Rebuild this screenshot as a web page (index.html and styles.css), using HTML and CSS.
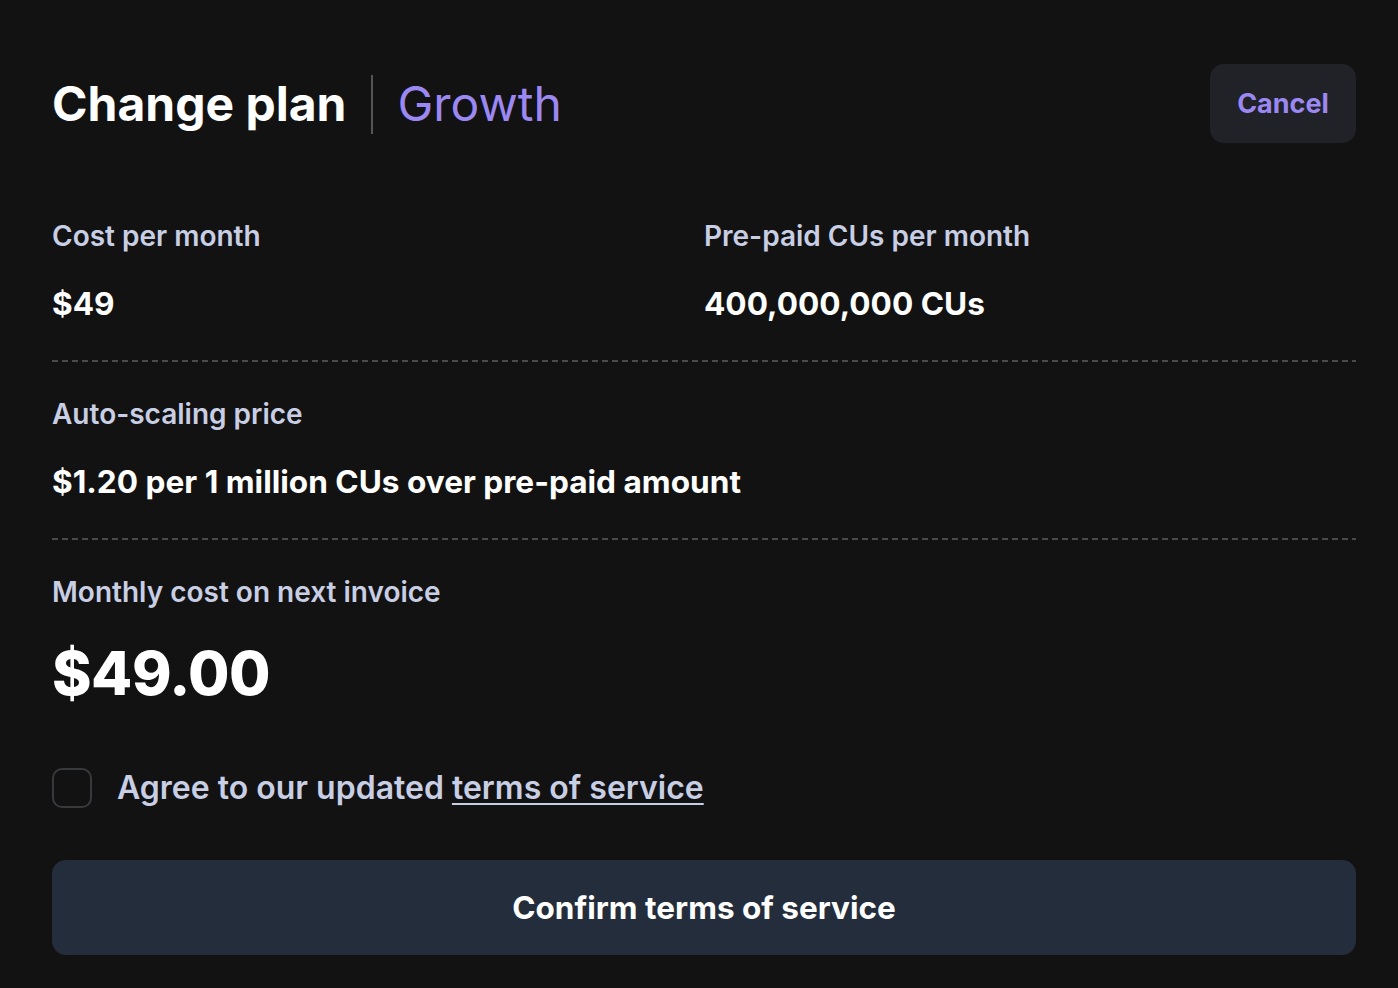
FILE: index.html
```html
<!DOCTYPE html>
<html lang="en">
<head>
<meta charset="utf-8">
<title>Change plan</title>
<link rel="stylesheet" href="styles.css">
</head>
<body>
<main class="panel">
  <header class="head">
    <div class="title-row">
      <h1 class="title">Change plan</h1>
      <span class="divider"></span>
      <span class="plan">Growth</span>
    </div>
    <button class="cancel" type="button">Cancel</button>
  </header>

  <section class="grid">
    <div class="cell">
      <div class="label">Cost per month</div>
      <div class="value">$49</div>
    </div>
    <div class="cell">
      <div class="label">Pre-paid CUs per month</div>
      <div class="value">400,000,000 CUs</div>
    </div>
  </section>

  <hr class="dash">

  <section class="cell">
    <div class="label">Auto-scaling price</div>
    <div class="value">$1.20 per 1 million CUs over pre-paid amount</div>
  </section>

  <hr class="dash">

  <section class="cell">
    <div class="label">Monthly cost on next invoice</div>
    <div class="total">$49.00</div>
  </section>

  <label class="agree">
    <span class="box"></span>
    <span class="agree-text">Agree to our updated <a href="#" class="link">terms of service</a></span>
  </label>

  <button class="confirm" type="button">Confirm terms of service</button>
</main>
</body>
</html>
```

FILE: styles.css
```css
* { box-sizing: border-box; }
html, body { margin: 0; padding: 0; }
body {
  background: #121212;
  font-family: Inter, "Noto Sans", sans-serif;
  color: #ffffff;
}
.panel {
  width: 1398px;
  padding: 64px 42px 0 52px;
}
.head {
  display: flex;
  justify-content: space-between;
  align-items: flex-start;
}
.title-row {
  display: flex;
  align-items: center;
  height: 80px;
}
.title {
  margin: 0;
  font-size: 48px;
  font-weight: 700;
  line-height: 1;
}
.divider {
  width: 2px;
  height: 59px;
  background: #555555;
  margin: 0 24px 0 25px;
}
.plan {
  font-size: 48px;
  font-weight: 400;
  color: #9b88f2;
  line-height: 1;
}
.cancel {
  width: 146px;
  height: 79px;
  border: 0;
  border-radius: 14px;
  background: #202227;
  color: #9b88f2;
  font-family: inherit;
  font-size: 27px;
  font-weight: 700;
  cursor: pointer;
}
.grid {
  display: grid;
  grid-template-columns: 652px 652px;
  margin-top: 74px;
}
.label {
  font-size: 28px;
  font-weight: 600;
  color: #c8cee3;
  line-height: 36px;
}
.value {
  font-size: 31.6px;
  font-weight: 700;
  color: #ffffff;
  line-height: 40px;
  margin-top: 30px;
}
.dash {
  width: 1304px;
  height: 2px;
  border: 0;
  margin: 36px 0 34px;
  background-image: repeating-linear-gradient(to right, #4a4a4a 0 6px, transparent 6px 10px);
}
.total {
  font-size: 60px;
  font-weight: 800;
  line-height: 70px;
  margin-top: 28px;
  letter-spacing: -0.5px;
}
.agree {
  display: flex;
  align-items: center;
  gap: 25px;
  margin-top: 60px;
}
.box {
  width: 40px;
  height: 40px;
  border: 2px solid #38393d;
  border-radius: 10px;
  flex: none;
}
.agree-text {
  font-size: 32px;
  font-weight: 600;
  color: #c8cee3;
  line-height: 40px;
}
.link {
  color: #c8cee3;
  text-decoration: underline;
  text-decoration-thickness: 2px;
  text-underline-offset: 4px;
}
.confirm {
  display: block;
  width: 1304px;
  height: 95px;
  margin-top: 52px;
  border: 0;
  border-radius: 14px;
  background: #242d3b;
  color: #ffffff;
  font-family: inherit;
  font-size: 31.5px;
  font-weight: 700;
  cursor: pointer;
}
```
